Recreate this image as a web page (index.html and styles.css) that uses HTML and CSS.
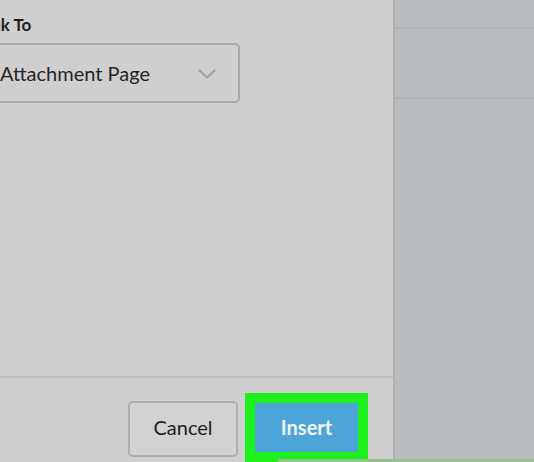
FILE: index.html
```html
<!DOCTYPE html>
<html>
<head>
<meta charset="utf-8">
<link rel="stylesheet" href="styles.css">
</head>
<body>
<div class="screen">
  <section class="dialog">
    <div class="content">
      <div class="field-label">Link To</div>
      <div class="select">
        <span class="select-text">Attachment Page</span>
        <svg class="chevron" width="18" height="10" viewBox="0 0 18 10"><path d="M1.5 1.5 L9 8.5 L16.5 1.5" fill="none" stroke="#98a2ab" stroke-width="2" stroke-linecap="round" stroke-linejoin="round"/></svg>
      </div>
    </div>
    <div class="footer">
      <button class="btn btn-cancel">Cancel</button>
      <div class="highlight">
        <button class="btn btn-insert">Insert</button>
      </div>
    </div>
  </section>
  <aside class="side">
    <div class="side-row r1"></div>
    <div class="side-row r2"></div>
    <div class="side-row r3"></div>
  </aside>
  <div class="green-strip"></div>
</div>
</body>
</html>
```
FILE: styles.css
```css
* { box-sizing: border-box; }
html, body { margin: 0; padding: 0; }
body {
  width: 534px;
  height: 462px;
  overflow: hidden;
  font-family: Lato, "Open Sans", sans-serif;
  background: #cfcfcf;
}
.screen {
  position: relative;
  display: flex;
  width: 534px;
  height: 462px;
}
.dialog {
  width: 395px;
  height: 462px;
  background: #cfcfcf;
  border-right: 2px solid #aeb2b6;
  display: flex;
  flex-direction: column;
}
.content {
  flex: 1;
  padding-top: 13px;
}
.field-label {
  margin-left: -22px;
  font-size: 17px;
  font-weight: 700;
  color: #1f1f1f;
  line-height: 24px;
}
.select {
  margin-top: 6px;
  margin-left: -16px;
  width: 256px;
  height: 60px;
  border: 2px solid #a2aab2;
  border-radius: 5px;
  display: flex;
  align-items: center;
  padding-left: 14px;
  padding-right: 22px;
}
.select-text {
  flex: 1;
  font-size: 20px;
  color: #262626;
}
.chevron { display: block; margin-top: 2px; }
.footer {
  border-top: 2px solid #bdbdbd;
  height: 86px;
  display: flex;
  justify-content: flex-end;
  align-items: flex-end;
  padding-right: 25px;
  gap: 7px;
}
.btn {
  font-family: Lato, "Open Sans", sans-serif;
  font-size: 20px;
  cursor: pointer;
}
.btn-cancel {
  width: 110px;
  height: 56px;
  margin-bottom: 5px;
  background: #d2d2d2;
  border: 2px solid #a9afb5;
  border-radius: 5px;
  color: #1e1e1e;
  padding: 0 0 4px 0;
}
.highlight {
  width: 123px;
  height: 69px;
  background: #1ef01e;
  padding: 10px 10px 0 10px;
}
.btn-insert {
  width: 103px;
  height: 49px;
  background: #4ca4d9;
  border: none;
  border-radius: 1px;
  color: #f2f7fb;
  font-weight: 700;
  padding: 0 0 2px 0;
}
.side {
  flex: 1;
  background: #b9bdc0;
  display: flex;
  flex-direction: column;
}
.side-row { border-bottom: 2px solid #b1b5b8; }
.r1 { height: 29px; }
.r2 { height: 70px; }
.r3 { flex: 1; border-bottom: none; }
.green-strip {
  position: absolute;
  left: 278px;
  right: 0;
  bottom: 0;
  height: 3px;
  background: #97c18a;
}
```
